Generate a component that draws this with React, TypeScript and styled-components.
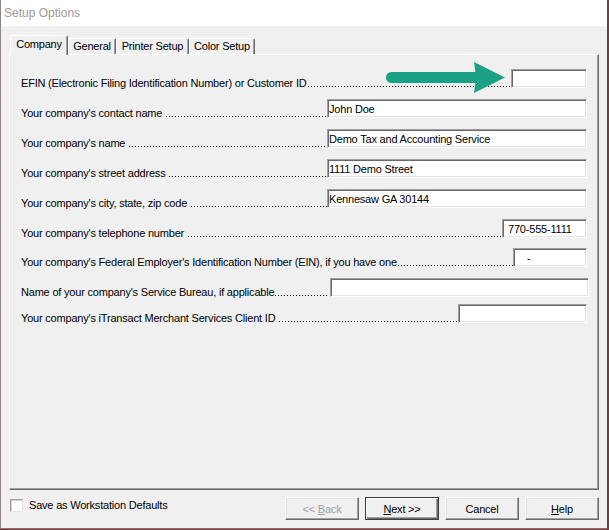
import React from 'react';
import styled, { createGlobalStyle } from 'styled-components';

const Global = createGlobalStyle`
  html, body { margin: 0; padding: 0; background: #6e3d3d; }
  body { font-family: "Liberation Sans", Arial, sans-serif; }
  * { box-sizing: border-box; }
`;

const Window = styled.div`
  width: 607px;
  height: 529px;
  background: #f0f0f0;
  border-left: 1px solid #8f8585;
  border-bottom: 1px solid #9a6a6a;
  display: flex;
  flex-direction: column;
  font-family: "Liberation Sans", Arial, sans-serif;
  font-size: 11px;
  letter-spacing: -0.2px;
  color: #000;
`;

const TitleBar = styled.div`
  height: 26px;
  background: #fff;
  display: flex;
  align-items: center;
  padding-left: 3px;
`;

const Title = styled.span`
  font-size: 12px;
  letter-spacing: 0;
  line-height: 26px;
  color: #9b9b9b;
`;

const Body = styled.div`
  flex: 1;
  display: flex;
  flex-direction: column;
  padding: 9px 8px 0 8px;
`;

const TabStrip = styled.div`
  height: 20px;
  margin-bottom: -1px;
  padding-left: 1px;
  display: flex;
  align-items: flex-end;
  position: relative;
  z-index: 1;
`;

const Tab = styled.div<{ $w: number; $selected?: boolean }>`
  width: ${(p) => p.$w}px;
  height: ${(p) => (p.$selected ? 20 : 16)}px;
  margin-bottom: ${(p) => (p.$selected ? 0 : 1)}px;
  padding-top: ${(p) => (p.$selected ? 2 : 1)}px;
  line-height: 12px;
  text-align: center;
  background: #f0f0f0;
  border-top: 1px solid #fff;
  border-left: 1px solid #fff;
  border-right: 1px solid #696969;
  border-radius: 2px 2px 0 0;
  box-shadow: inset -1px 0 #a0a0a0;
  white-space: nowrap;
  position: relative;
  z-index: ${(p) => (p.$selected ? 2 : 1)};
`;

const Panel = styled.div`
  position: relative;
  height: 436px;
  border-top: 1px solid #fff;
  border-left: 1px solid #fff;
  border-right: 1px solid #696969;
  border-bottom: 1px solid #696969;
  box-shadow: inset -1px -1px #a0a0a0;
  padding: 14px 11px 0 11px;
`;

const Form = styled.div`
  display: flex;
  flex-direction: column;
`;

const Row = styled.div<{ $gap: number }>`
  display: flex;
  align-items: flex-end;
  height: 19px;
  margin-top: ${(p) => p.$gap}px;
`;

const Label = styled.div`
  flex: 1;
  min-width: 0;
  display: flex;
  line-height: 12px;
  height: 12px;
  margin-bottom: -1px;
  white-space: pre;
`;

const LabelText = styled.span`
  flex: none;
`;

const Leader = styled.span`
  flex: 1;
  min-width: 0;
  align-self: stretch;
  background-image: linear-gradient(to right, #000 1px, transparent 1px);
  background-size: 3px 1px;
  background-repeat: repeat-x;
  background-position: 1px 9px;
`;

const Field = styled.input<{ $w: number; $pad?: number; $ml?: number; $mr?: number }>`
  width: ${(p) => p.$w}px;
  height: 19px;
  flex: none;
  margin: 0 ${(p) => p.$mr ?? 0}px 0 ${(p) => p.$ml ?? 0}px;
  padding: 0 0 0 ${(p) => p.$pad ?? 1}px;
  background: #fff;
  border-top: 1px solid #a0a0a0;
  border-left: 1px solid #a0a0a0;
  border-bottom: 1px solid #fff;
  border-right: 1px solid #fff;
  box-shadow: inset 1px 1px #696969, inset -1px -1px #e3e3e3;
  font-family: "Liberation Sans", Arial, sans-serif;
  font-size: 11px;
  letter-spacing: -0.2px;
  color: #000;
  outline: none;
`;

const Arrow = styled.svg`
  position: absolute;
  left: 376px;
  top: 6px;
`;

const Footer = styled.div`
  margin-top: 7px;
  height: 23px;
  display: flex;
  justify-content: space-between;
  align-items: flex-start;
  padding-left: 1px;
`;

const CheckRow = styled.label`
  display: flex;
  align-items: center;
  gap: 6px;
  margin-top: 2px;
  line-height: 13px;
`;

const CheckBox = styled.span`
  width: 13px;
  height: 13px;
  background: #fff;
  border-top: 1px solid #a0a0a0;
  border-left: 1px solid #a0a0a0;
  border-bottom: 1px solid #e3e3e3;
  border-right: 1px solid #e3e3e3;
  box-shadow: inset 1px 1px #cfcfcf;
`;

const Buttons = styled.div`
  display: flex;
  gap: 6px;
`;

const Button = styled.button<{ $default?: boolean }>`
  width: 74px;
  height: 23px;
  padding: 0;
  background: #f0f0f0;
  font-family: "Liberation Sans", Arial, sans-serif;
  font-size: 11px;
  letter-spacing: -0.2px;
  color: #000;
  border: 1px solid;
  border-color: ${(p) => (p.$default ? '#3c3c3c' : '#fff #696969 #696969 #fff')};
  box-shadow: ${(p) =>
    p.$default
      ? 'inset 1px 1px #fff, inset -1px -1px #696969, inset -2px -2px #a0a0a0'
      : 'inset -1px -1px #a0a0a0, inset 1px 1px #e3e3e3'};
  &:disabled {
    color: #a0a0a0;
  }
`;

type RowDef = {
  label: string;
  w: number;
  value?: string;
  gap: number;
  pad?: number;
  ml?: number;
  mr?: number;
};

const rows: RowDef[] = [
  { label: 'EFIN (Electronic Filing Identification Number) or Customer ID', w: 76, gap: 0 },
  { label: "Your company's contact name ", w: 260, value: 'John Doe', gap: 11 },
  { label: "Your company's name ", w: 260, value: 'Demo Tax and Accounting Service', gap: 11 },
  { label: "Your company's street address ", w: 260, value: '1111 Demo Street', gap: 11 },
  { label: "Your company's city, state, zip code ", w: 260, value: 'Kennesaw GA 30144', gap: 11 },
  { label: "Your company's telephone number ", w: 85, value: '770-555-1111', gap: 11, pad: 5 },
  {
    label: "Your company's Federal Employer's Identification Number (EIN), if you have one",
    w: 74,
    value: '-',
    gap: 10,
    pad: 13,
  },
  { label: "Name of your company's Service Bureau, if applicable", w: 259, gap: 11, ml: 3, mr: -2 },
  { label: "Your company's iTransact Merchant Services Client ID ", w: 129, gap: 7 },
];

export default function App() {
  return (
    <>
      <Global />
      <Window>
        <TitleBar>
          <Title>Setup Options</Title>
        </TitleBar>
        <Body>
          <TabStrip>
            <Tab $w={58} $selected>Company</Tab>
            <Tab $w={48}>General</Tab>
            <Tab $w={73}>Printer Setup</Tab>
            <Tab $w={66}>Color Setup</Tab>
          </TabStrip>
          <Panel>
            <Form>
              {rows.map((r) => (
                <Row key={r.label} $gap={r.gap}>
                  <Label>
                    <LabelText>{r.label}</LabelText>
                    <Leader />
                  </Label>
                  <Field
                    $w={r.w}
                    $pad={r.pad}
                    $ml={r.ml}
                    $mr={r.mr}
                    readOnly
                    defaultValue={r.value ?? ''}
                  />
                </Row>
              ))}
            </Form>
            <Arrow width="120" height="33" viewBox="0 0 120 33">
              <rect x="0" y="11" width="94" height="11" rx="5.5" fill="#1ba185" />
              <path d="M88 1 L119 16.5 L88 32 Q91 16.5 88 1 Z" fill="#1ba185" />
            </Arrow>
          </Panel>
          <Footer>
            <CheckRow>
              <CheckBox />
              <span>Save as Workstation Defaults</span>
            </CheckRow>
            <Buttons>
              <Button disabled>
                &lt;&lt; <u>B</u>ack
              </Button>
              <Button $default>
                <u>N</u>ext &gt;&gt;
              </Button>
              <Button>Cancel</Button>
              <Button>
                <u>H</u>elp
              </Button>
            </Buttons>
          </Footer>
        </Body>
      </Window>
    </>
  );
}
